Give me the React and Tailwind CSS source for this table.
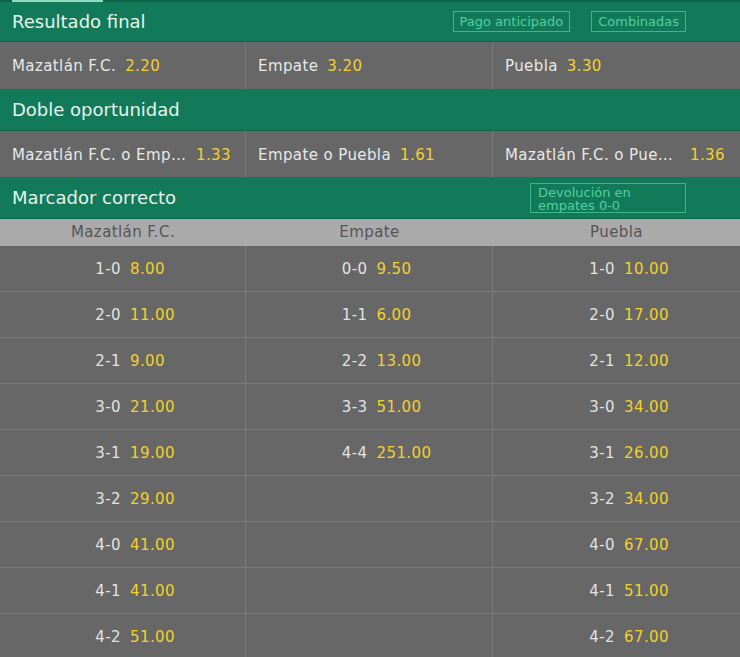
import React from 'react';

const font = { fontFamily: '"DejaVu Sans", Verdana, sans-serif' };

const scores = [
  [['1-0', '8.00'], ['0-0', '9.50'], ['1-0', '10.00']],
  [['2-0', '11.00'], ['1-1', '6.00'], ['2-0', '17.00']],
  [['2-1', '9.00'], ['2-2', '13.00'], ['2-1', '12.00']],
  [['3-0', '21.00'], ['3-3', '51.00'], ['3-0', '34.00']],
  [['3-1', '19.00'], ['4-4', '251.00'], ['3-1', '26.00']],
  [['3-2', '29.00'], null, ['3-2', '34.00']],
  [['4-0', '41.00'], null, ['4-0', '67.00']],
  [['4-1', '41.00'], null, ['4-1', '51.00']],
  [['4-2', '51.00'], null, ['4-2', '67.00']],
];

const MarketHeader = ({ title, children, className = '' }) => (
  <div className={`flex items-center bg-[#137a59] border-b border-[#0e6447] pl-[12px] pr-[54px] ${className}`}>
    <span className="text-[18px] text-[#e6f4ee] flex-1">{title}</span>
    {children}
  </div>
);

const Tag = ({ children }) => (
  <span className="border border-[#3cb888] text-[#52cf9f] text-[13px] leading-none px-[6px] py-[3px] ml-[21px]">
    {children}
  </span>
);

const OddsCell = ({ name, odds, last }) => (
  <div className={`flex items-center min-w-0 pl-[12px] pr-[14px] pt-[2px] ${last ? '' : 'border-r border-[#7a7a7a]'}`}>
    <span className="truncate max-w-[176px] text-[#e8e8e8]">{name}</span>
    <span className="shrink-0 ml-[9px] text-[#f4d02a]">{odds}</span>
  </div>
);

const ScoreCell = ({ item, last }) => (
  <div className={`flex items-center pt-[1px] pl-[6px] ${last ? '' : 'border-r border-[#7a7a7a]'}`}>
    {item && (
      <>
        <span className="flex-1 text-right pr-[1px] text-[#e2e2e2]">{item[0]}</span>
        <span className="flex-1 text-left pl-[8px] text-[#f4d02a]">{item[1]}</span>
      </>
    )}
  </div>
);

export default function App() {
  return (
    <div style={font} className="w-[740px] h-[657px] overflow-hidden bg-[#666666] text-[15px] tracking-[0.4px]">
      <div className="h-[2px] bg-[#0e6447] pl-[12px]">
        <div className="w-[91px] h-[2px] bg-[#8fdcbf]" />
      </div>

      <MarketHeader title="Resultado final" className="h-[40px] tracking-normal">
        <Tag>Pago anticipado</Tag>
        <Tag>Combinadas</Tag>
      </MarketHeader>
      <div className="grid grid-cols-[246px_247px_247px] h-[47px] bg-[#676767]">
        <OddsCell name="Mazatlán F.C." odds="2.20" />
        <OddsCell name="Empate" odds="3.20" />
        <OddsCell name="Puebla" odds="3.30" last />
      </div>

      <MarketHeader title="Doble oportunidad" className="h-[42px] tracking-normal" />
      <div className="grid grid-cols-[246px_247px_247px] h-[46px] bg-[#676767]">
        <OddsCell name="Mazatlán F.C. o Empate" odds="1.33" />
        <OddsCell name="Empate o Puebla" odds="1.61" />
        <OddsCell name="Mazatlán F.C. o Puebla" odds="1.36" last />
      </div>

      <MarketHeader title="Marcador correcto" className="h-[42px] tracking-normal">
        <div className="w-[156px] h-[30px] border border-[#3cb888] text-[#52cf9f] text-[13px] leading-[13px] px-[7px] pt-[2px] overflow-hidden">
          Devolución en empates 0-0
        </div>
      </MarketHeader>
      <div className="grid grid-cols-[246px_247px_247px] h-[27px] bg-[#aaaaaa] text-[#555555] items-center text-center">
        <span>Mazatlán F.C.</span>
        <span>Empate</span>
        <span>Puebla</span>
      </div>

      {scores.map((row, i) => (
        <div
          key={i}
          className={`grid grid-cols-[246px_247px_247px] bg-[#676767] ${i === 0 ? 'h-[45px]' : 'h-[46px] border-t border-[#7a7a7a]'}`}
        >
          {row.map((item, j) => (
            <ScoreCell key={j} item={item} last={j === 2} />
          ))}
        </div>
      ))}
    </div>
  );
}
